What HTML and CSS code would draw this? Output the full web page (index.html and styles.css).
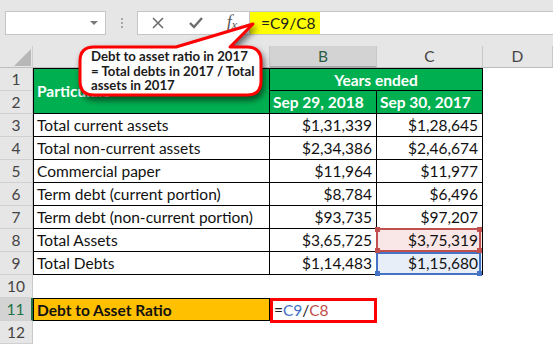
FILE: index.html
```html
<!DOCTYPE html>
<html>
<head>
<meta charset="utf-8">
<link rel="stylesheet" href="styles.css">
</head>
<body>
<div class="app">
  <div class="toolbar">
    <div class="namebox"><span class="dd"></span></div>
    <div class="dots"><i></i><i></i><i></i></div>
    <div class="fxbox">
      <svg class="ico" width="14" height="14" viewBox="0 0 14 14"><path d="M2 2 L12 12 M12 2 L2 12" stroke="#6d6d6d" stroke-width="1.6" fill="none"/></svg>
      <svg class="ico" width="16" height="14" viewBox="0 0 16 14"><path d="M2 7 L6 11 L14 2" stroke="#6d6d6d" stroke-width="2.4" fill="none"/></svg>
      <span class="fx">f<sub>x</sub></span>
    </div>
    <div class="formula"><span class="hl">=C9/C8</span></div>
  </div>

  <div class="sheet">
    <div class="corner"><svg width="33" height="22" viewBox="0 0 33 22"><polygon points="14,20 31,20 31,3" fill="#b7b7b7"/></svg></div>
    <div class="ch">A</div>
    <div class="ch sel">B</div>
    <div class="ch">C</div>
    <div class="ch">D</div>

    <div class="rh">1</div>
    <div class="c g a top merged">Particulars</div>
    <div class="c g top span2 center">Years ended</div>
    <div class="e"></div>

    <div class="rh">2</div>
    <div class="c g">Sep 29, 2018</div>
    <div class="c g">Sep 30, 2017</div>
    <div class="e"></div>

    <div class="rh">3</div>
    <div class="c a">Total current assets</div>
    <div class="c n">$1,31,339</div>
    <div class="c n">$1,28,645</div>
    <div class="e"></div>

    <div class="rh">4</div>
    <div class="c a">Total non-current assets</div>
    <div class="c n">$2,34,386</div>
    <div class="c n">$2,46,674</div>
    <div class="e"></div>

    <div class="rh">5</div>
    <div class="c a">Commercial paper</div>
    <div class="c n">$11,964</div>
    <div class="c n">$11,977</div>
    <div class="e"></div>

    <div class="rh">6</div>
    <div class="c a">Term debt (current portion)</div>
    <div class="c n">$8,784</div>
    <div class="c n">$6,496</div>
    <div class="e"></div>

    <div class="rh">7</div>
    <div class="c a">Term debt (non-current portion)</div>
    <div class="c n">$93,735</div>
    <div class="c n">$97,207</div>
    <div class="e"></div>

    <div class="rh">8</div>
    <div class="c a">Total Assets</div>
    <div class="c n">$3,65,725</div>
    <div class="c n ref red">$3,75,319<span class="frame"><i class="tl"></i><i class="tr"></i><i class="bl"></i><i class="br"></i></span></div>
    <div class="e"></div>

    <div class="rh">9</div>
    <div class="c a">Total Debts</div>
    <div class="c n">$1,14,483</div>
    <div class="c n ref blue">$1,15,680<span class="frame"><i class="tl"></i><i class="tr"></i><i class="bl"></i><i class="br"></i></span></div>
    <div class="e"></div>

    <div class="rh">10</div>
    <div class="e"></div><div class="e"></div><div class="e"></div><div class="e"></div>

    <div class="rh sel11">11</div>
    <div class="c a o top">Debt to Asset Ratio</div>
    <div class="edit">=<span class="r9">C9</span>/<span class="r8">C8</span></div>
    <div class="e"></div><div class="e"></div>

    <div class="rh">12</div>
    <div class="e"></div><div class="e"></div><div class="e"></div><div class="e"></div>
  </div>

  <svg class="callout" width="553" height="346" viewBox="0 0 553 346">
    <path d="M94,47 L176,47 L253,24 L230,47 L247,47 Q261,47 261,61 L261,81 Q261,95 247,95 L94,95 Q80,95 80,81 L80,61 Q80,47 94,47 Z" fill="#ffffff" stroke="#ff0000" stroke-width="3" stroke-linejoin="round"/>
  </svg>
  <div class="note">Debt to asset ratio in 2017<br>= Total debts in 2017 / Total<br>assets in 2017</div>
</div>
</body>
</html>
```

FILE: styles.css
```css
* { box-sizing: border-box; }
body { margin: 0; font-family: "Lato", "Liberation Sans", sans-serif; }
.app { position: relative; width: 553px; height: 346px; overflow: hidden; background: #fff; }

.toolbar { height: 46px; background: #e6e6e6; display: flex; align-items: flex-start; padding-top: 11px; }
.namebox { margin-left: 5px; width: 101px; height: 24px; background: #fff; border: 1px solid #c6c6c6; display: flex; align-items: center; justify-content: flex-end; padding-right: 7px; }
.dd { width: 0; height: 0; border-left: 4px solid transparent; border-right: 4px solid transparent; border-top: 4px solid #7a7a7a; }
.dots { width: 31px; display: flex; flex-direction: column; align-items: center; gap: 2px; padding-top: 7px; }
.dots i { width: 2px; height: 2px; background: #a8a8a8; display: block; }
.fxbox { width: 113px; height: 24px; background: #fff; border: 1px solid #c6c6c6; display: flex; align-items: center; justify-content: space-between; padding: 0 12px 0 13px; }
.fx { font-family: "Liberation Serif", serif; font-style: italic; font-size: 18px; color: #5a5a5a; line-height: 1; padding-bottom: 2px; }
.fx sub { font-size: 12px; vertical-align: -1px; }
.formula { flex: 1; height: 24px; background: #fff; border-top: 1px solid #c6c6c6; border-bottom: 1px solid #c6c6c6; display: flex; }
.hl { background: #ffff00; width: 70px; padding-left: 11px; font-size: 15.5px; line-height: 22px; color: #222; }

.sheet { display: grid; grid-template-columns: 33px 237px 107px 106px 1fr; grid-template-rows: 22px repeat(12, 23px); font-size: 15.5px; }
.corner { background: #e6e6e6; border-right: 1px solid #cfcfcf; border-bottom: 1px solid #bdbdbd; }
.corner svg { display: block; }
.ch { background: #e6e6e6; border-right: 1px solid #c8c8c8; border-bottom: 1px solid #bdbdbd; color: #444; text-align: center; line-height: 21px; font-size: 15.5px; }
.ch.sel { background: #d3d3d3; border-bottom: 2px solid #a9a9a9; color: #2c5e45; }
.rh { background: #e6e6e6; border-right: 1px solid #c8c8c8; border-bottom: 1px solid #d0d0d0; color: #444; text-align: center; line-height: 22px; font-size: 15.5px; }
.rh.sel11 { background: #d3d3d3; border-right: 2px solid #217346; color: #217346; }
.e { background: #fff; }

.c { border-right: 1px solid #000; border-bottom: 1px solid #000; line-height: 22px; color: #111; white-space: nowrap; position: relative; }
.c.a { border-left: 1px solid #000; padding-left: 3px; }
.c.top { border-top: 1px solid #000; }
.c.n { text-align: right; padding-right: 4px; }
.c.g { background: #00b050; color: #fff; font-weight: bold; padding-left: 3px; }
.c.merged { grid-row: span 2; display: flex; align-items: center; }
.c.span2 { grid-column: span 2; }
.c.center { text-align: center; padding-left: 0; }
.c.o { background: #ffc000; font-weight: bold; border-bottom: 1px solid #000; }

.ref.red { background: #f9e6e6; z-index: 2; }
.ref.blue { background: #e7eef8; z-index: 1; }
.frame { position: absolute; left: -1px; top: -1px; right: 1px; bottom: -1px; border: 2px solid; pointer-events: none; }
.red .frame { border-color: #c0504d; }
.blue .frame { border-color: #4472c4; top: 0; }
.frame i { position: absolute; width: 5px; height: 5px; display: block; }
.red .frame i { background: #c0504d; }
.blue .frame i { background: #4472c4; }
.frame .tl { left: -3px; top: -3px; }
.frame .tr { right: -3px; top: -3px; }
.frame .bl { left: -3px; bottom: -3px; }
.frame .br { right: -3px; bottom: -3px; }
.blue .frame .tl, .blue .frame .tr { display: none; }

.edit { border: 3px solid #ff0000; margin-bottom: -2px; padding-left: 1px; line-height: 18px; color: #222; background: #fff; position: relative; z-index: 1; }
.r9 { color: #4472c4; }
.r8 { color: #c0504d; }

.callout { position: absolute; left: 0; top: 0; pointer-events: none; filter: drop-shadow(2px 4px 3px rgba(0, 0, 0, 0.55)); }
.note { position: absolute; left: 91px; top: 49px; font-size: 13.2px; font-weight: bold; line-height: 14.5px; color: #1b1b1b; white-space: nowrap; }
```
